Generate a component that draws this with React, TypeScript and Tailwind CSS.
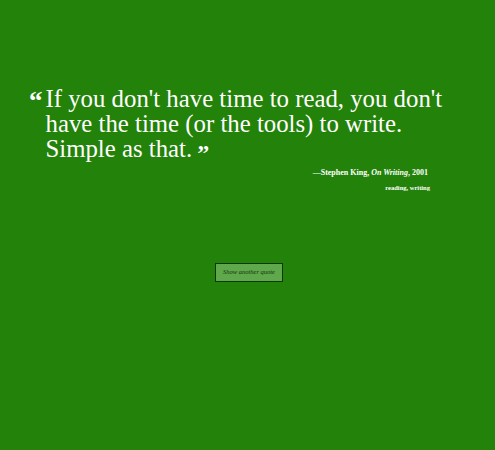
const quote = {
  text: "If you don't have time to read, you don't have the time (or the tools) to write. Simple as that.",
  author: "Stephen King",
  source: "On Writing",
  year: "2001",
  tags: ["reading", "writing"],
};

const App = () => {
  return (
    <div
      className="min-h-screen bg-[#23820a] text-white"
      style={{ fontFamily: '"Liberation Serif", "DejaVu Serif", serif' }}
    >
      <div className="pt-[86px] pl-[29px] pr-[45px]">
        <blockquote className="flex items-start">
          <span className="mr-[3px] text-[27px] leading-[30px] font-bold">&ldquo;</span>
          <p className="text-[24.8px] leading-[25px]">
            {quote.text}
            <span className="ml-[5px] align-[-4px] text-[24px] font-bold leading-none">&rdquo;</span>
          </p>
        </blockquote>
        <div className="mt-[2px] text-right text-[8px] font-bold pr-[22px]">
          &mdash;{quote.author}, <em>{quote.source}</em>, {quote.year}
        </div>
        <div className="mt-[4px] text-right text-[6.5px] font-bold pr-[20px]">
          {quote.tags.join(", ")}
        </div>
      </div>
      <div className="mt-[70px] flex justify-center pl-[3px]">
        <button
          type="button"
          className="h-[19px] w-[68px] border border-[#0d3a04] bg-[#5fa84c] text-[6.5px] italic text-[#10330a]"
        >
          Show another quote
        </button>
      </div>
    </div>
  );
};

export default App;
